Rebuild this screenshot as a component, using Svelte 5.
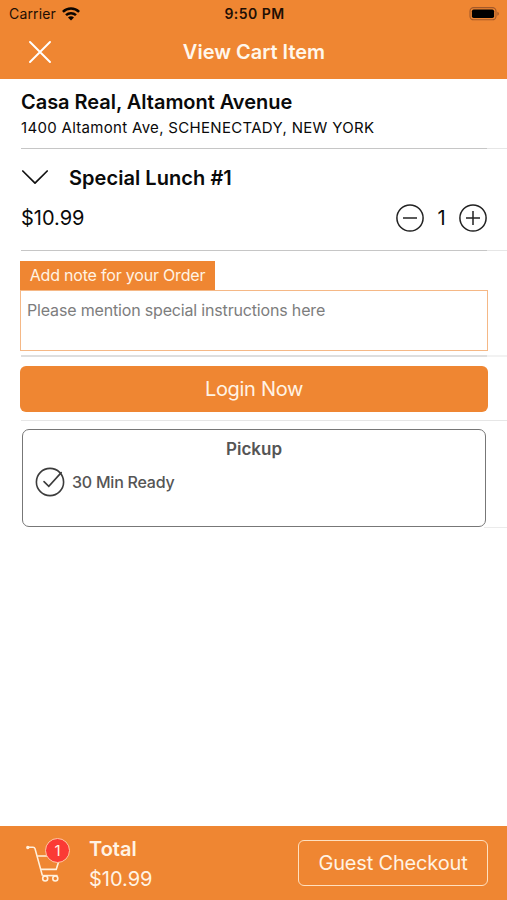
<script lang="ts">
	interface CartItem {
		name: string;
		price: number;
		qty: number;
	}

	const restaurant = {
		name: 'Casa Real, Altamont Avenue',
		address: '1400 Altamont Ave, SCHENECTADY, NEW YORK'
	};

	let items = $state<CartItem[]>([{ name: 'Special Lunch #1', price: 10.99, qty: 1 }]);
	let note = $state('');

	const count = $derived(items.reduce((sum, item) => sum + item.qty, 0));
	const total = $derived(items.reduce((sum, item) => sum + item.price * item.qty, 0));

	function money(value: number): string {
		return '$' + value.toFixed(2);
	}
</script>

<div class="screen">
	<header class="top">
		<div class="status">
			<div class="status__left">
				<span class="status__carrier">Carrier</span>
				<svg width="18" height="14" viewBox="0 0 18 14" aria-hidden="true">
					<g fill="none" stroke="#0c0500" stroke-width="2.5">
						<path d="M0.9 4.9C5.4 0.5 12.6 0.5 17.1 4.9" />
						<path d="M4 8.2C6.8 5.5 11.2 5.5 14 8.2" />
					</g>
					<path d="M6 10.5C7.8 8.9 10.2 8.9 12 10.5L9 13.5Z" fill="#0c0500" />
				</svg>
			</div>
			<span class="status__time">9:50 PM</span>
			<svg class="status__battery" width="31" height="14" viewBox="0 0 31 14" aria-hidden="true">
				<rect x="1" y="0.6" width="26" height="12.2" rx="3.6" fill="none" stroke="#a3592a" stroke-width="1.1" />
				<rect x="2.9" y="2.4" width="22.2" height="8.6" rx="1.8" fill="#000" />
				<path d="M28.4 4.7V8.7C30.4 8 30.4 5.4 28.4 4.7Z" fill="#a3592a" />
			</svg>
		</div>
		<div class="nav">
			<button class="nav__close" aria-label="Close">
				<svg width="22" height="22" viewBox="0 0 22 22">
					<path d="M1 1L21 21M21 1L1 21" stroke="#fff" stroke-width="1.9" stroke-linecap="round" />
				</svg>
			</button>
			<h1>View Cart Item</h1>
		</div>
	</header>

	<main>
		<section class="shop">
			<h2>{restaurant.name}</h2>
			<p>{restaurant.address}</p>
		</section>
		<div class="rule"></div>

		{#each items as item (item.name)}
			<section class="item">
				<div class="item__head">
					<svg width="26" height="15" viewBox="0 0 26 15" aria-hidden="true">
						<path d="M0.8 1L13 13.2L25.2 1" fill="none" stroke="#111" stroke-width="1.7" stroke-linecap="round" stroke-linejoin="round" />
					</svg>
					<h3>{item.name}</h3>
				</div>
				<div class="item__row">
					<span class="item__price">{money(item.price)}</span>
					<div class="stepper">
						<button aria-label="Remove one" onclick={() => (item.qty = Math.max(1, item.qty - 1))}>
							<svg width="28" height="28" viewBox="0 0 28 28">
								<circle cx="14" cy="14" r="13.1" />
								<path d="M7 14H21" />
							</svg>
						</button>
						<span class="stepper__qty">{item.qty}</span>
						<button aria-label="Add one" onclick={() => (item.qty += 1)}>
							<svg width="28" height="28" viewBox="0 0 28 28">
								<circle cx="14" cy="14" r="13.1" />
								<path d="M7 14H21M14 7V21" />
							</svg>
						</button>
					</div>
				</div>
			</section>
		{/each}
		<div class="rule"></div>

		<section class="note">
			<label for="note">Add note for your Order</label>
			<textarea id="note" placeholder="Please mention special instructions here" bind:value={note}></textarea>
		</section>
		<div class="rule rule--thick"></div>

		<section class="login">
			<button>Login Now</button>
		</section>
		<div class="rule rule--light"></div>

		<section class="pickup">
			<h4>Pickup</h4>
			<div class="pickup__option">
				<svg width="30" height="30" viewBox="0 0 30 30" fill="none" stroke="#3c3c3c" stroke-width="1.6" aria-hidden="true">
					<circle cx="15" cy="15" r="13.6" />
					<path d="M9 14.6L13.8 19.4L26.2 5.6" stroke-linecap="round" />
				</svg>
				<span>30 Min Ready</span>
			</div>
		</section>
		<div class="rule rule--tail"></div>
	</main>

	<footer>
		<div class="cart">
			<svg width="37" height="38" viewBox="0 0 37 38" fill="none" stroke="#fff0dc" stroke-width="1.6" stroke-linejoin="round" aria-hidden="true">
				<path d="M2.2 3.2H7Q8.6 3.2 9 4.6L16.4 31.6" />
				<path d="M11.2 12H34.4L30.2 25.4H14.8" />
				<path d="M16.4 31.6H31.6" />
				<circle cx="19.2" cy="34.5" r="2.5" />
				<circle cx="29.3" cy="34.5" r="2.5" />
				<circle cx="1.8" cy="3.5" r="0.9" fill="#fff0dc" />
			</svg>
			<span class="cart__badge">{count}</span>
		</div>
		<div class="total">
			<strong>Total</strong>
			<span>{money(total)}</span>
		</div>
		<button class="checkout">Guest Checkout</button>
	</footer>
</div>

<style>
	:global(body) {
		background: #fff;
	}
	.screen {
		--orange: #ef8632;
		display: flex;
		flex-direction: column;
		height: 900px;
		overflow: hidden;
		font-family: Inter, 'Liberation Sans', sans-serif;
		color: #0a0a0a;
		background: #fff;
	}
	.screen * {
		box-sizing: border-box;
	}
	h1,
	h2,
	h3,
	h4,
	p {
		margin: 0;
		font-weight: 600;
	}
	button {
		padding: 0;
		border: 0;
		background: none;
		font: inherit;
		color: inherit;
	}
	svg {
		display: block;
	}

	.top {
		height: 79px;
		background: var(--orange);
	}
	.status {
		display: grid;
		grid-template-columns: 1fr auto 1fr;
		align-items: center;
		height: 27px;
		padding: 0 7px 0 9px;
		color: #1e0f04;
	}
	.status__left {
		display: flex;
		align-items: center;
		gap: 6px;
	}
	.status__carrier {
		font-size: 14px;
		letter-spacing: 0.15px;
	}
	.status__time {
		font-size: 14px;
		font-weight: 600;
		letter-spacing: 0.45px;
	}
	.status__battery {
		justify-self: end;
	}
	.nav {
		display: grid;
		grid-template-columns: 80px 1fr 79px;
		align-items: center;
		height: 50px;
	}
	.nav__close {
		justify-self: center;
	}
	.nav h1 {
		font-size: 20px;
		text-align: center;
		color: #fff7ec;
	}

	.rule {
		height: 1px;
		margin-left: 21px;
		background: linear-gradient(to right, #c6c6c6 466px, #e6e6e6 466px);
	}
	.rule--thick {
		height: 2px;
		background: linear-gradient(to right, #dedede 466px, #f2f2f2 466px);
	}
	.rule--light {
		background: #e6e6e6;
	}
	.rule--tail {
		margin-left: 484px;
		background: #ebebeb;
	}

	.shop {
		height: 69px;
		padding: 11px 20px 0 21px;
	}
	.shop h2 {
		font-size: 20px;
		line-height: 25px;
		letter-spacing: -0.04px;
	}
	.shop p {
		margin-top: 3px;
		font-size: 15px;
		font-weight: 400;
		line-height: 20px;
		letter-spacing: 0.31px;
	}

	.item {
		height: 101px;
		padding: 16px 20px 0 21px;
	}
	.item__head {
		display: flex;
		align-items: center;
		gap: 21px;
		height: 25px;
		padding-left: 1px;
	}
	.item__head h3 {
		font-size: 20px;
		letter-spacing: 0.05px;
	}
	.item__row {
		display: flex;
		align-items: center;
		justify-content: space-between;
		height: 31px;
		margin-top: 12px;
	}
	.item__price {
		font-size: 20px;
	}
	.stepper {
		display: flex;
		align-items: center;
	}
	.stepper svg {
		fill: none;
		stroke: #222;
		stroke-width: 1.5;
	}
	.stepper__qty {
		width: 35px;
		font-size: 20px;
		text-align: center;
	}

	.note {
		display: flex;
		flex-direction: column;
		align-items: flex-start;
		height: 104px;
		padding: 10px 19px 0 20px;
	}
	.note label {
		width: 195px;
		height: 29px;
		font-size: 16px;
		line-height: 29px;
		letter-spacing: -0.2px;
		text-align: center;
		color: #fff3e4;
		background: var(--orange);
	}
	.note textarea {
		width: 100%;
		height: 61px;
		margin: 0;
		padding: 9px 6px;
		border: 1px solid #f5b886;
		border-radius: 0;
		outline: 0;
		resize: none;
		font: inherit;
		font-size: 16px;
		line-height: 20px;
		letter-spacing: -0.17px;
		background: #fff;
	}
	.note textarea::placeholder {
		color: #7d7d7d;
	}

	.login {
		height: 63px;
		padding: 9px 19px 0 20px;
	}
	.login button {
		width: 100%;
		height: 46px;
		border-radius: 6px;
		font-size: 20px;
		letter-spacing: -0.3px;
		color: #fff3e4;
		background: var(--orange);
	}

	.pickup {
		height: 98px;
		margin: 8px 21px 0 22px;
		padding: 9px 12px 0;
		border: 1.5px solid #777;
		border-radius: 7px;
		color: #555;
	}
	.pickup h4 {
		font-size: 17px;
		line-height: 20px;
		text-align: center;
	}
	.pickup__option {
		display: flex;
		align-items: center;
		gap: 7px;
		height: 30px;
		margin-top: 8px;
		font-size: 16px;
		font-weight: 500;
		letter-spacing: -0.22px;
	}

	footer {
		display: flex;
		align-items: center;
		height: 74px;
		margin-top: auto;
		padding: 0 19px 0 26px;
		color: #fff3e4;
		background: var(--orange);
	}
	.cart {
		position: relative;
		width: 63px;
	}
	.cart__badge {
		position: absolute;
		top: -6px;
		left: 19px;
		width: 25px;
		height: 25px;
		border: 1px solid #ffc9a4;
		border-radius: 50%;
		font-size: 15px;
		line-height: 23px;
		text-align: center;
		background: #fb3a35;
	}
	.total {
		display: flex;
		flex-direction: column;
		flex: 1;
		padding-top: 1px;
		font-size: 20px;
		line-height: 30px;
	}
	.total strong {
		font-weight: 600;
	}
	.checkout {
		width: 190px;
		height: 46px;
		border: 1.5px solid #ffe0bf;
		border-radius: 6px;
		font-size: 20px;
		letter-spacing: -0.17px;
	}
</style>
